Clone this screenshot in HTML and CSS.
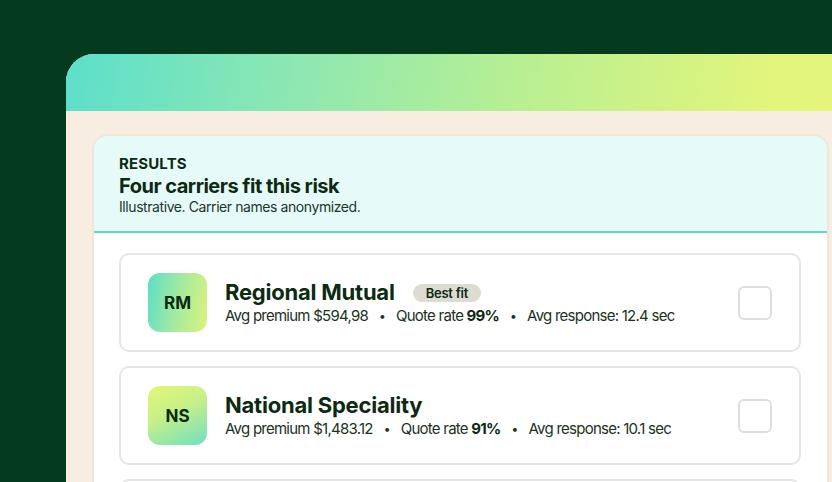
FILE: index.html
```html
<!DOCTYPE html>
<html>
<head>
<meta charset="utf-8">
<link rel="stylesheet" href="styles.css">
</head>
<body>
<div class="window">
  <div class="window-bar"></div>
  <div class="window-body">
    <section class="panel">
      <header class="panel-head">
        <div class="eyebrow">RESULTS</div>
        <h1 class="title">Four carriers fit this risk</h1>
        <p class="sub">Illustrative. Carrier names anonymized.</p>
      </header>
      <div class="list">
        <div class="card">
          <div class="avatar avatar-rm">RM</div>
          <div class="info">
            <div class="name-row"><span class="name">Regional Mutual</span><span class="badge">Best fit</span></div>
            <div class="meta"><span>Avg premium $594,98</span><span class="dot">•</span><span>Quote rate <b>99%</b></span><span class="dot">•</span><span>Avg response: 12.4 sec</span></div>
          </div>
          <div class="check"></div>
        </div>
        <div class="card">
          <div class="avatar avatar-ns">NS</div>
          <div class="info">
            <div class="name-row"><span class="name">National Speciality</span></div>
            <div class="meta"><span>Avg premium $1,483.12</span><span class="dot">•</span><span>Quote rate <b>91%</b></span><span class="dot">•</span><span>Avg response: 10.1 sec</span></div>
          </div>
          <div class="check"></div>
        </div>
        <div class="card"></div>
      </div>
    </section>
  </div>
</div>
</body>
</html>
```
FILE: styles.css
```css
html, body {
  margin: 0;
  padding: 0;
}
body {
  background: #043a1e;
  width: 832px;
  height: 482px;
  overflow: hidden;
  font-family: Inter, "Liberation Sans", sans-serif;
  color: #0c2a12;
}
.window {
  margin: 54px 0 0 66px;
  width: 800px;
  height: 600px;
  background: #f7eee1;
  border-top-left-radius: 28px;
  overflow: hidden;
}
.window-bar {
  height: 57px;
  background: linear-gradient(100deg, #5cdfcb 0%, #8fe8b0 30%, #bdf08f 60%, #e3f57b 88%, #e5f67a 100%);
}
.window-body {
  padding: 23px 0 0 26px;
}
.panel {
  width: 733px;
  border: 2px solid #ede6da;
  border-radius: 16px;
  background: #ffffff;
  overflow: hidden;
}
.panel-head {
  background: #e6faf8;
  border-bottom: 2px solid #5fd8c9;
  padding: 19px 25px 14px;
  height: 62px;
}
.eyebrow {
  font-size: 15px;
  font-weight: 700;
  line-height: 17px;
  letter-spacing: 0.01em;
}
.title {
  margin: 2px 0 0;
  font-size: 20px;
  font-weight: 700;
  line-height: 24px;
  letter-spacing: -0.025em;
}
.sub {
  margin: 0;
  font-size: 14px;
  line-height: 18px;
  letter-spacing: -0.03em;
  color: #22352a;
}
.list {
  padding: 20px 26px 0 25px;
  display: flex;
  flex-direction: column;
  gap: 14px;
}
.card {
  height: 95px;
  border: 2px solid #e6e6e4;
  border-radius: 10px;
  display: flex;
  align-items: center;
  padding: 0 27px;
}
.avatar {
  width: 59px;
  height: 59px;
  border-radius: 12px;
  display: flex;
  align-items: center;
  justify-content: center;
  font-size: 17px;
  font-weight: 700;
  color: #0c2a12;
  flex: none;
}
.avatar-rm {
  background: linear-gradient(100deg, #5cdec8 0%, #a3ea9f 50%, #dbf37e 100%);
}
.avatar-ns {
  background: linear-gradient(155deg, #e6f57a 0%, #c4f08a 45%, #6fdfc0 100%);
}
.info {
  margin-left: 18px;
  flex: 1;
  display: flex;
  flex-direction: column;
}
.name-row {
  display: flex;
  align-items: center;
  gap: 18px;
}
.name {
  font-size: 22px;
  font-weight: 700;
  line-height: 27px;
  letter-spacing: -0.01em;
}
.badge {
  background: #dcdcd2;
  border-radius: 10px;
  font-size: 13px;
  font-weight: 600;
  line-height: 18px;
  padding: 0 13px;
  letter-spacing: -0.02em;
}
.meta {
  font-size: 15px;
  line-height: 20px;
  letter-spacing: -0.05em;
  color: #1b3122;
  display: flex;
}
.meta b {
  font-weight: 700;
  color: #0c2a12;
}
.dot {
  margin: 0 11px;
  font-size: 12px;
}
.check {
  width: 30px;
  height: 30px;
  border: 2px solid #dedede;
  border-radius: 6px;
  flex: none;
}
```
